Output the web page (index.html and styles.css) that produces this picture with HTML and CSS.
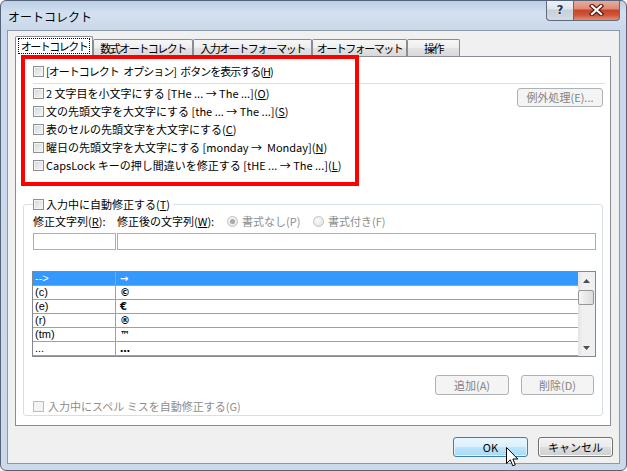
FILE: index.html
```html
<!DOCTYPE html>
<html lang="ja">
<head>
    <meta charset="UTF-8">
    <meta name="viewport" content="width=device-width, initial-scale=1.0">
    <title>オートコレクト</title>
    <link rel="stylesheet" href="styles.css">
</head>
<body>

<div class="window">
    <div class="titlebar">
        <span class="title">オートコレクト</span>
        <div class="caption-buttons">
            <span class="cap-btn help">?</span>
            <span class="cap-btn close">
                <svg width="15" height="12" viewBox="0 0 15 12">
                    <path d="M3 2 L12 10 M12 2 L3 10" stroke="#5a1b0f" stroke-width="4.5" stroke-linecap="square"/>
                    <path d="M3 2 L12 10 M12 2 L3 10" stroke="#fff" stroke-width="2.2" stroke-linecap="square"/>
                </svg>
            </span>
        </div>
    </div>

    <div class="client">
        <div class="tabs">
            <div class="tab active tab-autocorrect"><span class="focus">オートコレクト</span></div>
            <div class="tab tab-math">数式オートコレクト</div>
            <div class="tab tab-input">入力オートフォーマット</div>
            <div class="tab tab-format">オートフォーマット</div>
            <div class="tab tab-action">操作</div>
        </div>

        <div class="panel">
            <!-- 赤い枠（注釈） -->
            <div class="highlight"></div>

            <label class="check"><span class="box"></span><span class="tight">[オートコレクト オプション] ボタンを表示する(<u>H</u>)</span></label>
            <div class="sep"></div>

            <div class="options">
                <div class="opt-list">
                    <label class="check"><span class="box"></span>2 文字目を小文字にする [THe ... → The ...](<u>O</u>)</label>
                    <label class="check"><span class="box"></span>文の先頭文字を大文字にする [the ... → The ...](<u>S</u>)</label>
                    <label class="check"><span class="box"></span>表のセルの先頭文字を大文字にする(<u>C</u>)</label>
                    <label class="check"><span class="box"></span>曜日の先頭文字を大文字にする [monday → &nbsp;Monday](<u>N</u>)</label>
                    <label class="check"><span class="box"></span>CapsLock キーの押し間違いを修正する [tHE ... → The ...](<u>L</u>)</label>
                </div>
                <button class="btn btn-except" disabled>例外処理(E)...</button>
            </div>

            <fieldset class="group">
                <legend><label class="check"><span class="box"></span>入力中に自動修正する(<u>T</u>)</label></legend>

                <div class="labels">
                    <span class="lbl-find">修正文字列(<u>R</u>):</span>
                    <span class="lbl-replace">修正後の文字列(<u>W</u>):</span>
                    <span class="radio-opt radio-plain"><span class="radio checked"></span>書式なし(P)</span>
                    <span class="radio-opt"><span class="radio"></span>書式付き(F)</span>
                </div>

                <div class="inputs">
                    <div class="field field-find"></div>
                    <div class="field field-replace"></div>
                </div>

                <div class="list">
                    <div class="rows">
                        <div class="row selected"><span>--&gt;</span><span class="sym">→</span></div>
                        <div class="row"><span>(c)</span><span class="sym">©</span></div>
                        <div class="row"><span>(e)</span><span class="sym">€</span></div>
                        <div class="row"><span>(r)</span><span class="sym">®</span></div>
                        <div class="row"><span>(tm)</span><span class="sym">™</span></div>
                        <div class="row"><span>...</span><span class="sym">…</span></div>
                    </div>
                    <div class="scrollbar">
                        <div class="arrow">
                            <svg width="7" height="4" viewBox="0 0 7 4"><path d="M0 4 L3.5 0 L7 4 Z" fill="#4d4d4d"/></svg>
                        </div>
                        <div class="thumb"></div>
                        <div class="track"></div>
                        <div class="arrow">
                            <svg width="7" height="4" viewBox="0 0 7 4"><path d="M0 0 L3.5 4 L7 0 Z" fill="#4d4d4d"/></svg>
                        </div>
                    </div>
                </div>

                <div class="list-buttons">
                    <button class="btn btn-add" disabled>追加(A)</button>
                    <button class="btn btn-del" disabled>削除(D)</button>
                </div>

                <label class="check disabled"><span class="box"></span>入力中にスペル ミスを自動修正する(G)</label>
            </fieldset>
        </div>

        <div class="footer">
            <button class="btn default">OK</button>
            <button class="btn">キャンセル</button>
        </div>
    </div>

    <!-- マウスカーソル -->
    <svg class="cursor" width="13" height="21" viewBox="0 0 13 21">
        <path d="M0.5 0.5 L0.5 16.5 L4.3 12.8 L6.8 18.8 L9.3 17.8 L6.9 12 L11.8 12 Z" fill="#fff" stroke="#000" stroke-width="1" stroke-linejoin="miter"/>
    </svg>
</div>

</body>
</html>
```

FILE: styles.css
```css
* {
    box-sizing: border-box;
}
body {
    margin: 0;
    background: #fff;
    font-family: "Noto Sans CJK JP", "DejaVu Sans", sans-serif;
    font-size: 11px;
    color: #000;
}
u {
    text-decoration-thickness: 1px;
    text-underline-offset: 1px;
}
.window {
    width: 627px;
    height: 471px;
    border: 1px solid #55647a;
    border-radius: 6px;
    background: linear-gradient(180deg, #bccfe6 0, #d3e0ef 12px, #c9d8ea 29px, #cbd9ea 100%);
    display: flex;
    flex-direction: column;
    position: relative;
    overflow: hidden;
}
.titlebar {
    height: 29px;
    display: flex;
    justify-content: space-between;
    align-items: flex-start;
    padding: 0 6px 0 7px;
    flex: none;
}
.title {
    font-size: 12px;
    line-height: 14px;
    margin-top: 9px;
}
.caption-buttons {
    display: flex;
    margin-top: -1px;
}
.cap-btn {
    height: 21px;
    border: 1px solid #5f6b7b;
    border-top: none;
    display: flex;
    align-items: center;
    justify-content: center;
}
.help {
    width: 27px;
    border-right: none;
    border-radius: 0 0 0 4px;
    background: linear-gradient(180deg, #eef2f7 0, #dfe6ee 45%, #c6d0db 50%, #d3dbe5 100%);
    color: #2b3440;
    font-family: "DejaVu Sans", sans-serif;
    font-weight: bold;
    font-size: 12px;
    text-shadow: 0 0 2px #fff, 0 0 1px #fff;
}
.close {
    width: 47px;
    border-radius: 0 0 4px 0;
    background: linear-gradient(180deg, #eab0a2 0, #de8a73 45%, #c7432b 50%, #cf5437 75%, #e2907a 100%);
}
.client {
    flex: 1;
    margin: 0 6px 6px;
    border: 1px solid #8d99a6;
    background: #f0f0f0;
    padding: 5px 8px 0 7px;
    position: relative;
}
.tabs {
    display: flex;
    align-items: flex-end;
    height: 20px;
    position: relative;
    z-index: 1;
}
.tab {
    height: 17px;
    border: 1px solid #898c95;
    border-bottom: none;
    border-radius: 2px 2px 0 0;
    background: linear-gradient(180deg, #f7f7f7 0, #eeeeee 50%, #e3e3e3 50%, #d9d9d9 100%);
    display: flex;
    align-items: center;
    justify-content: center;
    letter-spacing: -1.5px;
    white-space: nowrap;
}
.tab.active {
    height: 21px;
    margin-bottom: -1px;
    background: #fff;
    padding-bottom: 2px;
}
.tab-autocorrect { width: 78px; }
.tab-math { width: 100px; }
.tab-input { width: 119px; }
.tab-format { width: 95px; }
.tab-action { width: 53px; }
.focus {
    outline: 1px dotted #000;
    outline-offset: 1px;
    padding: 0 1px;
    line-height: 12px;
}
.panel {
    height: 370px;
    border: 1px solid #898c95;
    background: #fff;
    padding: 5px 7px 0 17px;
    position: relative;
}
.highlight {
    position: absolute;
    left: 5px;
    top: -2px;
    width: 338px;
    height: 131px;
    border: 4px solid #f00;
    z-index: 2;
}
.check {
    display: flex;
    align-items: center;
    height: 18px;
    white-space: nowrap;
}
.box {
    width: 11px;
    height: 11px;
    border: 1px solid #8e8f8f;
    background: linear-gradient(135deg, #d3d6da, #f7f7f7);
    box-shadow: inset 0 0 0 1px #f4f4f4;
    margin-right: 2px;
    flex: none;
}
.tight {
    letter-spacing: -1px;
    word-spacing: 3px;
}
.sep {
    height: 1px;
    background: #d5dfe5;
    margin: 3px -2px 0 0;
}
.options {
    display: flex;
    justify-content: space-between;
    align-items: flex-start;
}
.btn {
    font: inherit;
    height: 20px;
    line-height: 17px;
    border: 1px solid #707070;
    border-radius: 3px;
    background: linear-gradient(180deg, #f2f2f2 0, #ebebeb 50%, #dddddd 50%, #cfcfcf 100%);
    box-shadow: inset 0 0 0 1px #fbfbfb;
    color: #000;
    padding: 0;
}
.btn:disabled {
    border-color: #adb2b5;
    background: #f4f4f4;
    box-shadow: none;
    color: #838383;
}
.btn.default {
    border-color: #3c7fb1;
    background: linear-gradient(180deg, #eaf6fd 0, #d9f0fc 50%, #bee6fd 50%, #a7d9f5 100%);
    box-shadow: inset 0 0 0 1px #e4f4fc;
}
.btn-except {
    width: 86px;
    height: 19px;
    margin-top: 4px;
}
.group {
    margin: 21px 0 0 -10px;
    border: 1px solid #d5dfe5;
    border-radius: 3px;
    padding: 0 6px 0 9px;
    min-width: 0;
}
.group legend {
    padding: 0 3px 0 0;
}
.labels {
    display: flex;
    align-items: center;
    height: 16px;
    white-space: nowrap;
}
.lbl-find { width: 84px; }
.lbl-replace { width: 110px; }
.radio-opt {
    display: flex;
    align-items: center;
    color: #8d8d8d;
}
.radio-plain { width: 86px; }
.radio {
    width: 11px;
    height: 11px;
    border: 1px solid #c2c2c2;
    border-radius: 50%;
    background: radial-gradient(circle at 40% 35%, #fbfbfb, #dedede);
    margin-right: 4px;
    position: relative;
}
.radio.checked::after {
    content: "";
    position: absolute;
    left: 2px;
    top: 2px;
    width: 5px;
    height: 5px;
    border-radius: 50%;
    background: #a9a9a9;
}
.inputs {
    display: flex;
    gap: 1px;
    margin-top: 4px;
}
.field {
    height: 17px;
    border: 1px solid #abadb3;
    background: #fff;
}
.field-find { width: 83px; }
.field-replace { flex: 1; }
.list {
    display: flex;
    height: 86px;
    margin: 21px 0 0 -1px;
    border: 1px solid #828790;
    background: #fff;
}
.rows {
    flex: 1;
}
.row {
    display: grid;
    grid-template-columns: 83px 1fr;
    height: 14px;
    line-height: 13px;
    border-bottom: 1px solid #a0a0a0;
}
.row span:first-child {
    border-right: 1px solid #a0a0a0;
    padding-left: 2px;
    font-family: "Liberation Sans", sans-serif;
}
.row .sym {
    padding-left: 4px;
    font-family: "DejaVu Sans", sans-serif;
    font-weight: bold;
    font-size: 10px;
}
.row.selected {
    background: #3399ff;
    color: #fff;
}
.scrollbar {
    width: 17px;
    display: flex;
    flex-direction: column;
    background: linear-gradient(90deg, #e3e3e3 0, #f0f0f0 25%, #f0f0f0 100%);
}
.arrow {
    height: 17px;
    display: flex;
    align-items: center;
    justify-content: center;
}
.thumb {
    height: 15px;
    margin: 1px 1px 0 0;
    border: 1px solid #979797;
    border-radius: 2px;
    background: linear-gradient(90deg, #f5f5f5, #dcdcdc);
}
.track {
    flex: 1;
}
.list-buttons {
    display: flex;
    justify-content: flex-end;
    gap: 12px;
    margin: 18px 2px 0 0;
}
.btn-add { width: 74px; }
.btn-del { width: 73px; }
.check.disabled {
    margin-top: 2px;
    color: #8d8d8d;
}
.check.disabled .box {
    border-color: #bcbcbc;
    background: #f4f4f4;
    box-shadow: none;
    margin-right: 4px;
}
.footer {
    display: flex;
    justify-content: flex-end;
    gap: 10px;
    margin: 11px -2px 0 0;
}
.footer .btn {
    width: 75px;
}
.cursor {
    position: absolute;
    left: 505px;
    top: 446px;
    z-index: 5;
}
```
